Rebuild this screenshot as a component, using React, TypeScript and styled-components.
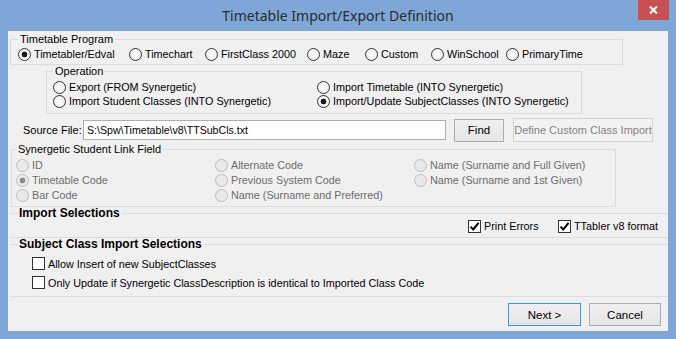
import React from "react";
import styled, { createGlobalStyle } from "styled-components";

const GlobalStyle = createGlobalStyle`
  html, body {
    margin: 0;
    padding: 0;
    background: #ffffff;
  }
  body {
    font-family: "Liberation Sans", Arial, sans-serif;
    font-size: 11px;
    color: #000;
  }
`;

const Window = styled.div`
  width: 676px;
  height: 339px;
  box-sizing: border-box;
  background: #7ea7d8;
  display: flex;
  flex-direction: column;
`;

const TitleBar = styled.div`
  height: 31px;
  display: grid;
  grid-template-columns: 1fr auto 1fr;
  align-items: start;
`;

const Title = styled.div`
  grid-column: 2;
  padding-top: 6px;
  font-family: "Noto Sans", "Open Sans", sans-serif;
  font-size: 14px;
  color: #2b2b2b;
  white-space: nowrap;
`;

const CloseButton = styled.button`
  grid-column: 3;
  justify-self: end;
  margin-right: 7px;
  width: 31px;
  height: 20px;
  border: none;
  padding: 0;
  background: #c75050;
  display: flex;
  align-items: center;
  justify-content: center;
`;

const Client = styled.div`
  margin: 0 8px;
  width: 660px;
  height: 300px;
  background: #f0f0f0;
  display: flex;
  flex-direction: column;
`;

const Group = styled.fieldset<{ $left: number; $width?: number; $flat?: boolean }>`
  box-sizing: border-box;
  margin: 0 0 0 ${(p) => p.$left}px;
  width: ${(p) => (p.$width ? `${p.$width}px` : "auto")};
  min-width: 0;
  padding: 0;
  border: 1px solid #dcdcdc;
  ${(p) => (p.$flat ? "border-left: none; border-right: none;" : "")}
`;

const Legend = styled.legend<{ $offset: number; $bold?: boolean }>`
  margin-left: ${(p) => p.$offset}px;
  padding: 0 2px;
  line-height: 12px;
  font-size: ${(p) => (p.$bold ? "12px" : "11px")};
  font-weight: ${(p) => (p.$bold ? 700 : 400)};
  color: #000;
`;

const RadioRow = styled.div<{ $pad: number; $top: number; $bottom: number }>`
  display: flex;
  padding: ${(p) => p.$top}px 0 ${(p) => p.$bottom}px ${(p) => p.$pad}px;
`;

const RadioGrid = styled.div<{ $cols: string; $rows: number; $row: number; $pad: number; $top: number; $bottom: number }>`
  display: grid;
  grid-template-columns: ${(p) => p.$cols};
  grid-template-rows: repeat(${(p) => p.$rows}, ${(p) => p.$row}px);
  grid-auto-flow: column;
  padding: ${(p) => p.$top}px 0 ${(p) => p.$bottom}px ${(p) => p.$pad}px;
`;

const Choice = styled.label<{ $width?: number; $disabled?: boolean }>`
  display: flex;
  align-items: center;
  gap: 3px;
  height: 14px;
  width: ${(p) => (p.$width ? `${p.$width}px` : "auto")};
  flex: none;
  white-space: nowrap;
  font-size: 10.8px;
  color: ${(p) => (p.$disabled ? "#6d6d6d" : "#000")};
`;

const RadioInput = styled.input.attrs({ type: "radio" })`
  appearance: none;
  -webkit-appearance: none;
  box-sizing: border-box;
  width: 13px;
  height: 13px;
  margin: 0;
  border: 1px solid #333;
  border-radius: 50%;
  background: radial-gradient(circle, #fdfdfd 0, #e9e9e9 100%);
  flex: none;

  &:checked {
    background: radial-gradient(circle, #1a1a1a 0 2.6px, #f6f6f6 3.2px);
  }
  &:disabled {
    border-color: #bcbcbc;
    background: #e9e9e9;
  }
  &:disabled:checked {
    background: radial-gradient(circle, #8a8a8a 0 2.6px, #e9e9e9 3.2px);
  }
`;

const SourceRow = styled.div`
  display: flex;
  align-items: center;
  margin: 4px 0 1px 15px;
  height: 24px;
`;

const FieldLabel = styled.span`
  width: 60px;
  flex: none;
  font-size: 11px;
`;

const TextInput = styled.input`
  box-sizing: border-box;
  width: 363px;
  height: 20px;
  margin: 0;
  padding: 0 3px;
  border: 1px solid #abadb3;
  background: #fff;
  font-family: "Liberation Sans", Arial, sans-serif;
  font-size: 10.6px;
  color: #000;
`;

const Button = styled.button<{ $width: number; $height?: number; $gap: number; $primary?: boolean }>`
  box-sizing: border-box;
  width: ${(p) => p.$width}px;
  height: ${(p) => p.$height ?? 23}px;
  margin-left: ${(p) => p.$gap}px;
  padding: 0;
  border: 1px solid ${(p) => (p.$primary ? "#3399ff" : "#adadad")};
  background: linear-gradient(#f0f0f0, #e5e5e5);
  font-family: "Liberation Sans", Arial, sans-serif;
  font-size: 11.5px;
  color: #000;
  white-space: nowrap;

  &:disabled {
    border-color: #d4d4d4;
    background: #f2f2f2;
    color: #838383;
    font-size: 11px;
  }
`;

const CheckRow = styled.div<{ $pad: number; $height: number }>`
  display: flex;
  align-items: center;
  height: ${(p) => p.$height}px;
  padding-left: ${(p) => p.$pad}px;
`;

const CheckLabel = styled.label<{ $width?: number }>`
  display: flex;
  align-items: center;
  gap: 3px;
  width: ${(p) => (p.$width ? `${p.$width}px` : "auto")};
  flex: none;
  white-space: nowrap;
  font-size: 10.8px;
`;

const Box = styled.span`
  box-sizing: border-box;
  width: 13px;
  height: 13px;
  border: 1px solid #333;
  background: #fff;
  display: flex;
  align-items: center;
  justify-content: center;
  flex: none;
`;

const SelectionsBody = styled.div<{ $top: number; $bottom: number }>`
  padding: ${(p) => p.$top}px 0 ${(p) => p.$bottom}px;
`;

const Footer = styled.div`
  display: flex;
  justify-content: flex-end;
  margin-top: 6px;
  padding-right: 7px;
`;

const Radio = ({
  label,
  checked,
  disabled,
  width,
  name,
}: {
  label: string;
  checked?: boolean;
  disabled?: boolean;
  width?: number;
  name: string;
}) => (
  <Choice $width={width} $disabled={disabled}>
    <RadioInput name={name} defaultChecked={checked} disabled={disabled} />
    {label}
  </Choice>
);

const Check = ({ label, checked, width }: { label: string; checked?: boolean; width?: number }) => (
  <CheckLabel $width={width}>
    <Box>
      {checked && (
        <svg width="11" height="11" viewBox="0 0 11 11">
          <path d="M1.5 5.6 L4.2 8.4 L9.6 1.8" fill="none" stroke="#000" strokeWidth="2" />
        </svg>
      )}
    </Box>
    {label}
  </CheckLabel>
);

const programs: [string, number][] = [
  ["Timetabler/Edval", 111],
  ["Timechart", 76],
  ["FirstClass 2000", 102],
  ["Maze", 58],
  ["Custom", 66],
  ["WinSchool", 75],
  ["PrimaryTime", 100],
];

const linkFields = [
  "ID",
  "Timetable Code",
  "Bar Code",
  "Alternate Code",
  "Previous System Code",
  "Name (Surname and Preferred)",
  "Name (Surname and Full Given)",
  "Name (Surname and 1st Given)",
];

export default function App() {
  return (
    <>
      <GlobalStyle />
      <Window>
        <TitleBar>
          <Title>Timetable Import/Export Definition</Title>
          <CloseButton aria-label="Close">
            <svg width="9" height="8" viewBox="0 0 9 8">
              <path d="M1 0.5 L8 7.5 M8 0.5 L1 7.5" stroke="#fff" strokeWidth="2" />
            </svg>
          </CloseButton>
        </TitleBar>
        <Client>
          <Group $left={2} $width={613} style={{ marginTop: 2 }}>
            <Legend $offset={7}>Timetable Program</Legend>
            <RadioRow $pad={7} $top={2} $bottom={3}>
              {programs.map(([p, w], i) => (
                <Radio key={p} name="program" label={p} width={w} checked={i === 0} />
              ))}
            </RadioRow>
          </Group>

          <Group $left={38} $width={536}>
            <Legend $offset={6}>Operation</Legend>
            <RadioGrid $cols="264px 1fr" $rows={2} $row={14} $pad={6} $top={3} $bottom={5}>
              <Radio name="op" label="Export (FROM Synergetic)" />
              <Radio name="op" label="Import Student Classes (INTO Synergetic)" />
              <Radio name="op" label="Import Timetable (INTO Synergetic)" />
              <Radio name="op" label="Import/Update SubjectClasses (INTO Synergetic)" checked />
            </RadioGrid>
          </Group>

          <SourceRow>
            <FieldLabel>Source File:</FieldLabel>
            <TextInput defaultValue="S:\Spw\Timetable\v8\TTSubCls.txt" />
            <Button $width={50} $gap={8}>Find</Button>
            <Button $width={140} $height={24} $gap={9} disabled>
              Define Custom Class Import
            </Button>
          </SourceRow>

          <Group $left={3} $width={605}>
            <Legend $offset={4}>Synergetic Student Link Field</Legend>
            <RadioGrid $cols="199px 199px 1fr" $rows={3} $row={15} $pad={4} $top={3} $bottom={3}>
              {linkFields.map((f) => (
                <Radio key={f} name="link" label={f} disabled checked={f === "Timetable Code"} />
              ))}
            </RadioGrid>
          </Group>

          <Group $left={2} $flat>
            <Legend $offset={7} $bold>
              Import Selections
            </Legend>
            <SelectionsBody $top={0} $bottom={4}>
              <CheckRow $pad={458} $height={14}>
                <Check label="Print Errors" checked width={90} />
                <Check label="TTabler v8 format" checked />
              </CheckRow>
            </SelectionsBody>
          </Group>

          <Group $left={2} $flat>
            <Legend $offset={7} $bold>
              Subject Class Import Selections
            </Legend>
            <SelectionsBody $top={4} $bottom={4}>
              <CheckRow $pad={22} $height={19}>
                <Check label="Allow Insert of new SubjectClasses" />
              </CheckRow>
              <CheckRow $pad={22} $height={19}>
                <Check label="Only Update if Synergetic ClassDescription is identical to Imported Class Code" />
              </CheckRow>
            </SelectionsBody>
          </Group>

          <Footer>
            <Button $width={73} $gap={0} $primary>
              Next &gt;
            </Button>
            <Button $width={72} $gap={8}>Cancel</Button>
          </Footer>
        </Client>
      </Window>
    </>
  );
}
